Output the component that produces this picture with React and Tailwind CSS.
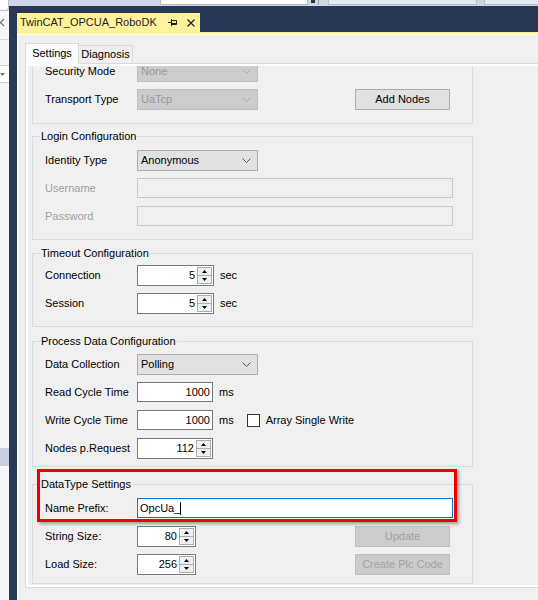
import React from "react";

const Chevron = ({ color = "#5a5a5a" }) => (
  <svg width="9" height="5" viewBox="0 0 9 5">
    <path d="M0.5 0.5L4.5 4.5L8.5 0.5" stroke={color} fill="none" strokeWidth="1" />
  </svg>
);

const Combo = ({ value, disabled }) => (
  <div
    className={`w-[121px] h-[21px] flex items-center justify-between pl-[3px] pr-[6px] border ${
      disabled ? "bg-[#cccccc] border-[#bfbfbf] text-[#999999]" : "bg-[#e1e1e1] border-[#adadad] text-black"
    }`}
  >
    <span>{value}</span>
    <Chevron color={disabled ? "#a8a8a8" : "#5a5a5a"} />
  </div>
);

const Spinner = () => (
  <div className="w-[15px] my-[1px] mr-[1px] flex flex-col border border-[#acacac] bg-[#f0f0f0]">
    <div className="flex-1 flex items-center justify-center border-b border-[#acacac]">
      <svg width="5" height="3" viewBox="0 0 5 3">
        <path d="M0 3L2.5 0L5 3Z" fill="#000" />
      </svg>
    </div>
    <div className="flex-1 flex items-center justify-center">
      <svg width="5" height="3" viewBox="0 0 5 3">
        <path d="M0 0L2.5 3L5 0Z" fill="#000" />
      </svg>
    </div>
  </div>
);

const Numeric = ({ value, w = "w-[77px]" }) => (
  <div className={`${w} h-[21px] flex bg-white border border-[#7a7a7a]`}>
    <div className="flex-1 flex items-center justify-end pr-[2px]">{value}</div>
    <Spinner />
  </div>
);

const TextBox = ({ value, w = "w-[76px]" }) => (
  <div className={`${w} h-[20px] flex items-center justify-end pr-[2px] bg-white border border-[#7a7a7a]`}>
    {value}
  </div>
);

const Button = ({ label, disabled }) => (
  <div
    className={`w-[95px] h-[21px] flex items-center justify-center border ${
      disabled ? "bg-[#cccccc] border-[#bfbfbf] text-[#a0a0a0]" : "bg-[#e1e1e1] border-[#adadad] text-black"
    }`}
  >
    {label}
  </div>
);

const Row = ({ label, dim, children }) => (
  <div className="flex items-center h-[20px]">
    <div className={`w-[92px] shrink-0 ${dim ? "text-[#a0a0a0]" : "text-black"}`}>{label}</div>
    {children}
  </div>
);

const Group = ({ title, className, children }) => (
  <fieldset className={`ml-[4px] w-[441px] border border-[#dcdcdc] p-0 ${className}`}>
    <legend className="ml-[7px] px-[1px] text-[11px] leading-[13px] text-black">{title}</legend>
    {children}
  </fieldset>
);

export default function App() {
  return (
    <div className="w-[538px] h-[600px] overflow-hidden bg-[#293955] flex flex-col font-['Liberation_Sans',Arial,sans-serif] text-[11px] text-black">
      {/* toolbar strip */}
      <div className="h-[6px] shrink-0 flex bg-[#cfd6e5]">
        <div className="w-[9px] bg-white border-r border-[#b4bccb]" />
        <div className="w-[151px]" />
        <div className="w-[148px] h-[5px] bg-white border-x border-b border-[#b4bccb]" />
        <div className="w-[10px] flex justify-center">
          <div className="w-[4px] h-[3px] bg-[#333]" />
        </div>
        <div className="w-[1px] h-[5px] bg-[#9aa4b8]" />
        <div className="w-[9px]" />
        <div className="w-[149px] h-[5px] bg-[#e6eaf2] border-x border-b border-[#b4bccb]" />
        <div className="w-[7px]" />
        <div className="flex-1 h-[5px] bg-[#e6eaf2] border-l border-b border-[#b4bccb]" />
      </div>

      <div className="flex flex-1 min-h-0">
        {/* left tool panel */}
        <div className="w-[9px] shrink-0 bg-[#f5f6f8] flex flex-col">
          <div className="h-[5px] bg-white border-r border-b border-[#b4bccb] rounded-br-[3px]" />
          <div className="h-[7px]" />
          <svg width="9" height="9" viewBox="0 0 9 9">
            <path d="M-3 1L4 8M4 1L-3 8" stroke="#717171" strokeWidth="1.2" />
          </svg>
          <div className="h-[12px]" />
          <div className="h-[1px] bg-[#d3d8e2]" />
          <div className="h-[25px]" />
          <div className="h-[18px] bg-white border-y border-[#cccccc] flex items-center">
            <svg width="5" height="3" viewBox="0 0 5 3">
              <path d="M0 0L2.5 3L5 0Z" fill="#717171" />
            </svg>
          </div>
          <div className="h-[365px]" />
          <div className="h-[18px] bg-[#c9cee0]" />
        </div>
        <div className="w-[8px] shrink-0" />

        {/* document */}
        <div className="flex-1 flex flex-col pt-[7px] min-w-0">
          <div className="h-[19px] flex shrink-0">
            <div className="w-[183px] bg-[#fff29d] flex items-center pl-[3px] text-[#1e1e1e]">
              <span className="flex-1">TwinCAT_OPCUA_RoboDK</span>
              <svg width="9" height="9" viewBox="0 0 9 9" className="mr-[10px]">
                <path d="M0 4.5H3M3.5 1V8M3.5 2.5H8.5V6.5H3.5M3.5 5.5H8.5" stroke="#1e1e1e" fill="none" />
              </svg>
              <svg width="8" height="8" viewBox="0 0 8 8" className="mr-[5px]">
                <path d="M0.5 0.5L7.5 7.5M7.5 0.5L0.5 7.5" stroke="#1e1e1e" strokeWidth="1.2" />
              </svg>
            </div>
          </div>
          <div className="h-[2px] shrink-0 bg-[#fff29d]" />
          <div className="flex-1 bg-[#f0f0f0] border-l border-t border-white pl-[7px] pt-[8px]">
            {/* tabs */}
            <div className="flex items-end h-[20px]">
              <div className="relative z-10 w-[54px] h-[21px] -mb-[1px] bg-[#fbfbfb] border border-b-0 border-[#d9d9d9] flex items-center justify-center pb-[2px]">
                Settings
              </div>
              <div className="w-[55px] h-[18px] -ml-[1px] bg-[#f0f0f0] border border-b-0 border-[#d9d9d9] flex items-center justify-center">
                Diagnosis
              </div>
            </div>
            {/* tab page */}
            <div className="border-l border-y border-[#d9d9d9] bg-white pl-[2px] py-[2px]">
              <div className="relative h-[519px] overflow-hidden bg-[#f0f0f0]">
                {/* Security (scrolled, top hidden) */}
                <div className="-mt-[5px] ml-[4px] w-[441px] border-x border-b border-[#dcdcdc] pl-[12px] pb-[14px] flex flex-col gap-[8px]">
                  <Row label="Security Mode">
                    <Combo value="None" disabled />
                  </Row>
                  <Row label="Transport Type">
                    <Combo value="UaTcp" disabled />
                    <div className="ml-[97px]">
                      <Button label="Add Nodes" />
                    </div>
                  </Row>
                </div>

                <Group title="Login Configuration" className="mt-[6px]">
                  <div className="pl-[12px] pt-[7px] pb-[13px] flex flex-col gap-[8px]">
                    <Row label="Identity Type">
                      <Combo value="Anonymous" />
                    </Row>
                    <Row label="Username" dim>
                      <div className="w-[316px] h-[20px] bg-[#f0f0f0] border border-[#c8c8c8]" />
                    </Row>
                    <Row label="Password" dim>
                      <div className="w-[316px] h-[20px] bg-[#f0f0f0] border border-[#c8c8c8]" />
                    </Row>
                  </div>
                </Group>

                <Group title="Timeout Configuration" className="mt-[7px]">
                  <div className="pl-[12px] pt-[5px] pb-[13px] flex flex-col gap-[8px]">
                    <Row label="Connection">
                      <Numeric value="5" />
                      <span className="ml-[6px]">sec</span>
                    </Row>
                    <Row label="Session">
                      <Numeric value="5" />
                      <span className="ml-[6px]">sec</span>
                    </Row>
                  </div>
                </Group>

                <Group title="Process Data Configuration" className="mt-[8px]">
                  <div className="pl-[12px] pt-[6px] pb-[8px] flex flex-col gap-[8px]">
                    <Row label="Data Collection">
                      <Combo value="Polling" />
                    </Row>
                    <Row label="Read Cycle Time">
                      <TextBox value="1000" />
                      <span className="ml-[6px]">ms</span>
                    </Row>
                    <Row label="Write Cycle Time">
                      <TextBox value="1000" />
                      <span className="ml-[6px]">ms</span>
                      <div className="ml-[13px] w-[13px] h-[13px] bg-white border border-[#333333]" />
                      <span className="ml-[6px]">Array Single Write</span>
                    </Row>
                    <Row label="Nodes p.Request">
                      <Numeric value="112" w="w-[76px]" />
                    </Row>
                  </div>
                </Group>

                <Group title="DataType Settings" className="mt-[11px]">
                  <div className="pl-[12px] pt-[7px] pb-[9px] flex flex-col gap-[8px]">
                    <Row label="Name Prefix:">
                      <div className="w-[316px] h-[20px] bg-white border border-[#0078d7] flex items-center pl-[2px]">
                        <span>OpcUa_</span>
                        <span className="w-[1px] h-[13px] bg-black" />
                      </div>
                    </Row>
                    <Row label="String Size:">
                      <Numeric value="80" w="w-[59px]" />
                      <div className="ml-[159px]">
                        <Button label="Update" disabled />
                      </div>
                    </Row>
                    <Row label="Load Size:">
                      <Numeric value="256" w="w-[59px]" />
                      <div className="ml-[159px]">
                        <Button label="Create Plc Code" disabled />
                      </div>
                    </Row>
                  </div>
                </Group>

                {/* annotation highlight */}
                <div className="absolute left-[9px] top-[403px] w-[420px] h-[53px] border-[3px] border-[#f00000] shadow-[2px_2px_3px_rgba(0,0,0,0.35)]" />
              </div>
            </div>
          </div>
        </div>
      </div>
    </div>
  );
}
